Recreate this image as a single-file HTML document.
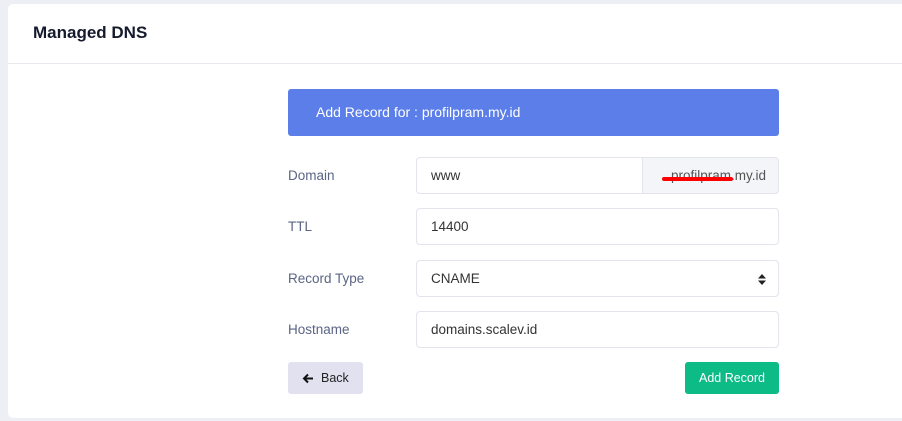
<!DOCTYPE html>
<html><head><style>
body{margin:0;width:902px;height:421px;background:#eeeef5;font-family:"Liberation Sans",sans-serif;position:relative;overflow:hidden}
.card{position:absolute;left:8px;top:4px;width:900px;height:414px;background:#fff;border-radius:5px}
.hdr{position:absolute;left:8px;top:4px;width:900px;height:59px;border-bottom:1px solid #e8e8ee}
.hdr span{position:absolute;left:25px;top:19px;font-size:17px;font-weight:bold;color:#151a2d}
.banner{position:absolute;left:288px;top:89px;width:491px;height:47px;background:#5b7ee9;border-radius:3px;color:#fff;font-size:14px;line-height:47px;box-sizing:border-box;padding-left:28px}
.lbl{position:absolute;left:288px;font-size:13.5px;color:#5a6484}
.inp{position:absolute;left:416px;width:363px;height:37px;border:1px solid #e3e4ec;border-radius:4px;box-sizing:border-box;font-size:13.5px;color:#333;line-height:35px;padding-left:14px}
.btn{position:absolute;top:362px;height:32px;border-radius:3px;font-size:12.5px;line-height:32px;box-sizing:border-box}
</style></head><body>
<div class="card"></div>
<div class="hdr"><span>Managed DNS</span></div>
<div class="banner">Add Record for : profilpram.my.id</div>
<div class="lbl" style="top:168px">Domain</div>
<div class="inp" style="top:157px;width:227px;border-radius:4px 0 0 4px">www</div>
<div class="inp" style="top:157px;left:642px;width:137px;background:#f4f5f8;border-radius:0 4px 4px 0;color:#555;padding-left:0;padding-right:12px;text-align:right">.profilpram.my.id<div style="position:absolute;left:19px;top:19px;width:71px;height:4px;background:#f00;border-radius:2px"></div></div>
<div class="lbl" style="top:219px">TTL</div>
<div class="inp" style="top:208px">14400</div>
<div class="lbl" style="top:271px">Record Type</div>
<div class="inp" style="top:260px">CNAME<svg style="position:absolute;right:12px;top:13px" width="8" height="11" viewBox="0 0 8 11"><path d="M0 4.5L4 0L8 4.5ZM0 6.5L4 11L8 6.5Z" fill="#222"/></svg></div>
<div class="lbl" style="top:322px">Hostname</div>
<div class="inp" style="top:311px">domains.scalev.id</div>
<div class="btn" style="left:288px;width:75px;background:#e2e1ef;color:#222;padding-left:33px"><svg style="position:absolute;left:14px;top:11px" width="12" height="11" viewBox="0 0 12 11"><path d="M11 5.5H2M6 1.5L2 5.5L6 9.5" stroke="#111" stroke-width="2" fill="none"/></svg>Back</div>
<div class="btn" style="left:685px;width:94px;background:#0dbb87;color:#fff;text-align:center">Add Record</div>
</body></html>
